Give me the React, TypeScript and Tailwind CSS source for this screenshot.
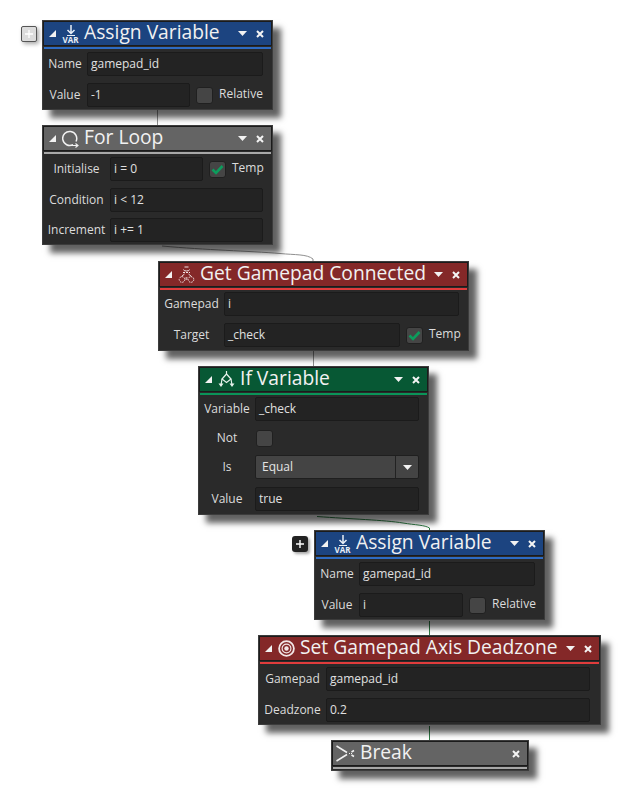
import React from "react";

type Theme = { head: string; line: string };
const BLUE: Theme = { head: "bg-[#1c4480]", line: "bg-[#2e6cc4]" };
const GRAY: Theme = { head: "bg-[#646464]", line: "bg-[#a8a8a8]" };
const RED: Theme = { head: "bg-[#842828]", line: "bg-[#e03c3c]" };
const GREEN: Theme = { head: "bg-[#075834]", line: "bg-[#0a9458]" };

function Collapse() {
  return (
    <svg width="9" height="9" viewBox="0 0 9 9" className="shrink-0">
      <path d="M8 1V8H1Z" fill="#f2f2f2" />
    </svg>
  );
}

function Dropdown() {
  return (
    <svg width="9" height="5" viewBox="0 0 9 5" className="shrink-0">
      <path d="M0 0H9L4.5 5Z" fill="#f2f2f2" />
    </svg>
  );
}

function Close() {
  return (
    <svg width="8" height="8" viewBox="0 0 8 8" className="shrink-0">
      <path d="M1 1L7 7M7 1L1 7" stroke="#f4f4f4" strokeWidth="2" />
    </svg>
  );
}

function VarIcon() {
  return (
    <div className="w-[17px] h-[20px] flex flex-col items-center justify-end shrink-0">
      <svg width="10" height="11" viewBox="0 0 10 11">
        <path d="M5 0V8.5M1.5 5L5 8.5L8.5 5" fill="none" stroke="#e8eef6" strokeWidth="1.5" />
        <path d="M1 10.5H9" stroke="#e8eef6" strokeWidth="1" />
      </svg>
      <span className="text-[8px] leading-[8px] font-bold text-[#e8eef6]">VAR</span>
    </div>
  );
}

function LoopIcon() {
  return (
    <svg width="17" height="18" viewBox="0 0 17 18" className="shrink-0">
      <path d="M11 14.6A7 7 0 1 1 14 11.5" fill="none" stroke="#f2f2f2" strokeWidth="1.5" />
      <path d="M8 15.5H16M13.5 13.5L16 15.5L13.5 17.5" fill="none" stroke="#f2f2f2" strokeWidth="1.1" />
    </svg>
  );
}

function GamepadIcon() {
  return (
    <svg width="17" height="17" viewBox="0 0 17 17" className="shrink-0">
      <g fill="none" stroke="#f0e4e4" strokeWidth="1">
        <path d="M6.5 1H10.5" />
        <path d="M5.5 3.5A3 1.5 0 0 0 11.5 3.5" />
        <path d="M5 6.5H12" strokeDasharray="2 1" />
        <path d="M6.5 8L3.5 10.5M10.5 8L13.5 10.5" />
        <circle cx="4" cy="13.5" r="2.8" strokeDasharray="1.5 1" />
        <circle cx="13" cy="13.5" r="2.8" strokeDasharray="1.5 1" />
      </g>
      <path d="M7.5 11H9.5V14H7.5Z" fill="#f0e4e4" opacity="0.6" />
    </svg>
  );
}

function IfIcon() {
  return (
    <svg width="17" height="17" viewBox="0 0 17 17" className="shrink-0">
      <g fill="none" stroke="#e8f2ec" strokeWidth="1.2">
        <path d="M8.5 0V3" />
        <path d="M8.5 3L13 8L8.5 11.5L4 8Z" />
        <path d="M4 8L3 14M13 8L14 14" />
      </g>
      <path d="M0.5 12.5L3 16L5.5 12.5ZM11.5 12.5L14 16L16.5 12.5Z" fill="#e8f2ec" />
    </svg>
  );
}

function TargetIcon() {
  return (
    <svg width="17" height="17" viewBox="0 0 17 17" className="shrink-0">
      <circle cx="8.5" cy="8.5" r="7.4" fill="none" stroke="#f2e6e6" strokeWidth="1.8" />
      <circle cx="8.5" cy="8.5" r="4.4" fill="none" stroke="#f2e6e6" strokeWidth="1.2" />
      <circle cx="8.5" cy="8.5" r="2.2" fill="#f2e6e6" />
    </svg>
  );
}

function BreakIcon() {
  return (
    <svg width="19" height="17" viewBox="0 0 19 17" className="shrink-0 -ml-[1px]">
      <g fill="none" stroke="#f2f2f2" strokeWidth="1.5">
        <path d="M0.5 1L11 7.5M11 9.5L0.5 16" />
        <path d="M18 5.5L15.5 7M18 11.5L15.5 10" />
        <path d="M13 8.5H16" strokeWidth="1" strokeDasharray="1 1" />
      </g>
    </svg>
  );
}

function Node({
  x,
  y,
  w,
  theme,
  icon,
  title,
  menu = true,
  arrow = true,
  gap = "gap-[7px]",
  pad = "pt-[3px] pb-[2px]",
  children,
}: {
  x: string;
  y: string;
  w: string;
  theme: Theme;
  icon: React.ReactNode;
  title: string;
  menu?: boolean;
  arrow?: boolean;
  gap?: string;
  pad?: string;
  children?: React.ReactNode;
}) {
  return (
    <div className={`absolute ${x} ${y} ${w} bg-[#2a2a2a] border border-[#3c3c3c] shadow-[8px_8px_6px_rgba(0,0,0,0.62)]`}>
      <div className={`h-[25px] ${theme.head} border border-[#1b1b1b] flex items-center pl-[4px] pr-[7px] gap-[5px]`}>
        {arrow ? <Collapse /> : null}
        {icon}
        <span className="text-[19.25px] leading-[25px] text-[#f1f1f1] whitespace-nowrap flex-1 -mt-[5px]">{title}</span>
        {menu ? <div className="mr-[4px] flex"><Dropdown /></div> : null}
        <Close />
      </div>
      <div className={`h-[2px] mt-[1px] mx-[1px] ${theme.line}`} />
      {children ? <div className={`flex flex-col ${gap} ${pad} pr-[9px]`}>{children}</div> : <div className="h-[1px]" />}
    </div>
  );
}

function Row({ label, labelW, extra = "", children }: { label: string; labelW: string; extra?: string; children: React.ReactNode }) {
  return (
    <div className={`flex items-center h-[24px] text-[12px] text-[#dcdcdc] ${extra}`}>
      <span className={`${labelW} text-center shrink-0 whitespace-nowrap`}>{label}</span>
      {children}
    </div>
  );
}

function Field({ value, w = "flex-1" }: { value: string; w?: string }) {
  return (
    <div className={`${w} h-[24px] min-w-0 shrink-0 bg-[#232323] border border-[#1b1b1b] rounded-[2px] flex items-center pl-[3px] text-[12px] text-[#e0e0e0] whitespace-nowrap`}>
      {value}
    </div>
  );
}

function Check({ on = false, label }: { on?: boolean; label?: string }) {
  return (
    <>
      <div className="w-[17px] h-[17px] ml-[6px] shrink-0 bg-[#454545] border border-[#202020] rounded-[3px] flex items-center justify-center">
        {on ? (
          <svg width="13" height="11" viewBox="0 0 13 11">
            <path d="M1.5 5.5L5 9L11.5 2" fill="none" stroke="#0c9c5c" strokeWidth="2.6" />
          </svg>
        ) : null}
      </div>
      {label ? <span className="ml-[6px] -mt-[3px] text-[12px] text-[#dcdcdc]">{label}</span> : null}
    </>
  );
}

export default function App() {
  return (
    <div className="relative w-[621px] h-[791px] bg-white overflow-hidden font-['Open_Sans',sans-serif]">
      <svg width="621" height="791" viewBox="0 0 621 791" className="absolute left-0 top-0" fill="none">
        <path d="M157.5 110V126" stroke="#8f8f8f" />
        <path d="M162 246C205 250 250 251 280 253.5C295 255 307 254 313 259V262" stroke="#8f8f8f" />
        <path d="M313.5 350V367" stroke="#8f8f8f" />
        <path d="M317 516.5C350 519 385 520 403 523C415 525 425 525 429.5 528V531" stroke="#2f7d45" />
        <path d="M429.5 621V636" stroke="#2f7d45" />
        <path d="M429.5 726V741" stroke="#2f7d45" />
      </svg>

      <div className="absolute left-[21px] top-[26px] w-[16px] h-[16px] bg-[#dcdcdc] border border-[#555555] rounded-[2px] shadow-[2px_2px_4px_rgba(0,0,0,0.35)] flex items-center justify-center">
        <svg width="8" height="8" viewBox="0 0 8 8"><path d="M4 0V8M0 4H8" stroke="#ffffff" strokeWidth="1.3" /></svg>
      </div>
      <div className="absolute left-[292px] top-[536px] w-[16px] h-[16px] bg-[#222222] rounded-[3px] shadow-[2px_2px_3px_rgba(0,0,0,0.35)] flex items-center justify-center">
        <svg width="8" height="8" viewBox="0 0 8 8"><path d="M4 0V8M0 4H8" stroke="#ffffff" strokeWidth="1.4" /></svg>
      </div>

      <Node x="left-[42px]" y="top-[20px]" w="w-[231px]" theme={BLUE} icon={<VarIcon />} title="Assign Variable">
        <Row label="Name" labelW="w-[44px]"><Field value="gamepad_id" /></Row>
        <Row label="Value" labelW="w-[44px]"><Field value="-1" w="w-[103px]" /><Check label="Relative" /></Row>
      </Node>

      <Node x="left-[42px]" y="top-[125px]" w="w-[231px]" theme={GRAY} icon={<LoopIcon />} title="For Loop" gap="gap-[6.5px]">
        <Row label="Initialise" labelW="w-[67px]"><Field value="i = 0" w="w-[93px]" /><Check on label="Temp" /></Row>
        <Row label="Condition" labelW="w-[67px]"><Field value="i < 12" /></Row>
        <Row label="Increment" labelW="w-[67px]"><Field value="i += 1" /></Row>
      </Node>

      <Node x="left-[158px]" y="top-[261px]" w="w-[311px]" theme={RED} icon={<GamepadIcon />} title="Get Gamepad Connected" pad="pt-[2px] pb-[3px]">
        <Row label="Gamepad" labelW="w-[65px]"><Field value="i" /></Row>
        <Row label="Target" labelW="w-[65px]"><Field value="_check" w="w-[176px]" /><Check on label="Temp" /></Row>
      </Node>

      <Node x="left-[198px]" y="top-[366px]" w="w-[231px]" theme={GREEN} icon={<IfIcon />} title="If Variable" gap="gap-0" pad="pt-[2px] pb-[3px]">
        <Row label="Variable" labelW="w-[56px]"><Field value="_check" /></Row>
        <Row label="Not" labelW="w-[56px]" extra="mt-[5px]"><div className="-ml-[5px]"><Check /></div></Row>
        <Row label="Is" labelW="w-[56px]" extra="mt-[5px]">
          <div className="flex-1 h-[24px] flex bg-[#444444] border border-[#1f1f1f] rounded-[2px] text-[12px] text-[#e4e4e4]">
            <div className="flex-1 flex items-center pl-[6px] border-r border-[#222222]">Equal</div>
            <div className="w-[22px] flex items-center justify-center"><Dropdown /></div>
          </div>
        </Row>
        <Row label="Value" labelW="w-[56px]" extra="mt-[8px]"><Field value="true" /></Row>
      </Node>

      <Node x="left-[314px]" y="top-[530px]" w="w-[231px]" theme={BLUE} icon={<VarIcon />} title="Assign Variable">
        <Row label="Name" labelW="w-[44px]"><Field value="gamepad_id" /></Row>
        <Row label="Value" labelW="w-[44px]"><Field value="i" w="w-[104px]" /><Check label="Relative" /></Row>
      </Node>

      <Node x="left-[258px]" y="top-[635px]" w="w-[343px]" theme={RED} icon={<TargetIcon />} title="Set Gamepad Axis Deadzone">
        <Row label="Gamepad" labelW="w-[67px]"><Field value="gamepad_id" w="w-[264px]" /></Row>
        <Row label="Deadzone" labelW="w-[67px]"><Field value="0.2" w="w-[264px]" /></Row>
      </Node>

      <Node x="left-[331px]" y="top-[740px]" w="w-[198px]" theme={GRAY} icon={<BreakIcon />} title="Break" menu={false} arrow={false} />
    </div>
  );
}
